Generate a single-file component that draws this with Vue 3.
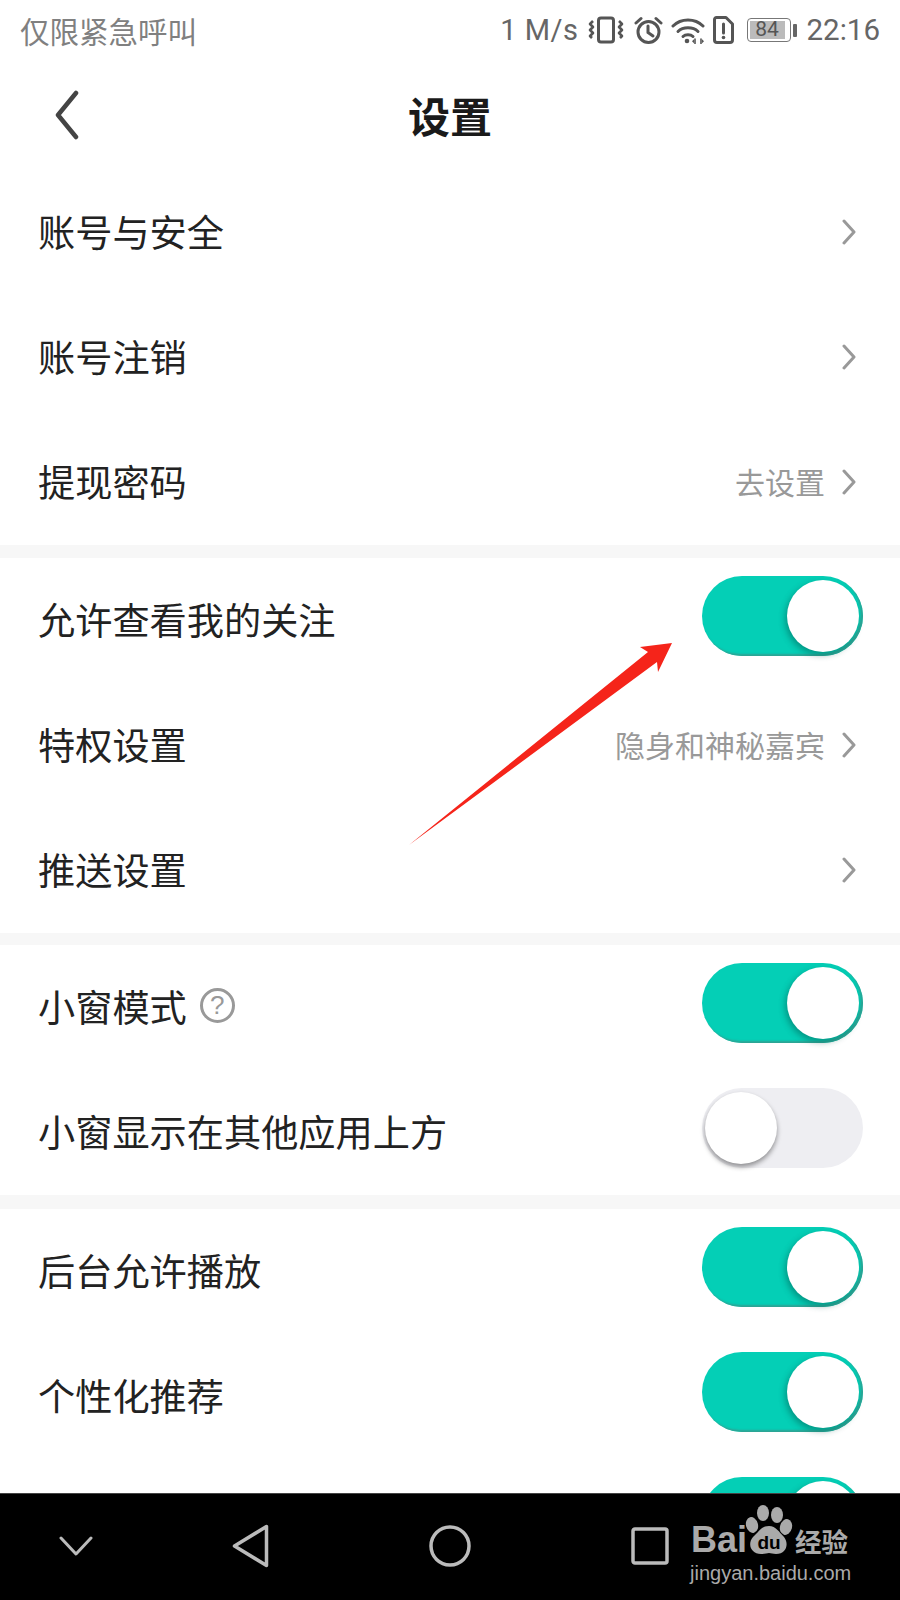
<script setup>
const sections = [
  { cls: 's1', rows: [
    { label: '账号与安全', type: 'link' },
    { label: '账号注销', type: 'link' },
    { label: '提现密码', type: 'link', value: '去设置' },
  ]},
  { cls: 's2', rows: [
    { label: '允许查看我的关注', type: 'on' },
    { label: '特权设置', type: 'link', value: '隐身和神秘嘉宾' },
    { label: '推送设置', type: 'link' },
  ]},
  { cls: 's3', rows: [
    { label: '小窗模式', type: 'on', help: true },
    { label: '小窗显示在其他应用上方', type: 'off' },
  ]},
  { cls: 's4', rows: [
    { label: '后台允许播放', type: 'on' },
    { label: '个性化推荐', type: 'on' },
    { label: '', type: 'on' },
  ]},
]
</script>

<template>
  <div class="phone">
    <div class="status">
      <span class="emergency">仅限紧急呼叫</span>
      <div class="status-right">
        <span class="speed">1 M/s</span>
        <svg class="ic-vib" width="36" height="28" viewBox="0 0 36 28" fill="none" stroke="#555" stroke-width="3" stroke-linejoin="round">
          <rect x="10.5" y="2" width="15" height="24" rx="2.5" />
          <path d="M5 5l-3 3 3 3-3 3 3 3-3 3 2 2" stroke-width="2.6" />
          <path d="M31 5l3 3-3 3 3 3-3 3 3 3-2 2" stroke-width="2.6" />
        </svg>
        <svg class="ic-alarm" width="29" height="29" viewBox="0 0 29 29" fill="none" stroke="#555" stroke-width="3" stroke-linecap="round">
          <circle cx="14.5" cy="16" r="10.5" />
          <path d="M14 10v6.5l5 3.5" />
          <path d="M2 7l5-4.5M27 7l-5-4.5" />
        </svg>
        <svg class="ic-wifi" width="34" height="27" viewBox="0 0 34 27" fill="none" stroke="#555" stroke-width="3" stroke-linecap="round">
          <path d="M2 9C10 1 24 1 32 9" />
          <path d="M7 14.5C12 9.5 22 9.5 27 14.5" />
          <path d="M12 19.5C14.5 17 19.5 17 22 19.5" />
          <circle cx="16" cy="24" r="2.3" fill="#555" stroke="none" />
          <path d="M24 22v4.5M30 22v4.5" stroke-width="1.6" />
          <path d="M21 24.2l2-2v4zM33 24.2l-2-2v4z" fill="#555" stroke="none" />
        </svg>
        <svg class="ic-sim" width="21" height="28" viewBox="0 0 21 28" fill="none" stroke="#555" stroke-width="3" stroke-linejoin="round">
          <path d="M3.5 1.5H13L19.5 8V24a2.5 2.5 0 0 1-2.5 2.5H4A2.5 2.5 0 0 1 1.5 24V3.5a2 2 0 0 1 2-2z" />
          <path d="M10.5 8v9" stroke-linecap="round" />
          <circle cx="10.5" cy="21.5" r="1.8" fill="#555" stroke="none" />
        </svg>
        <div class="battery">
          <div class="batt-body"><span class="batt-fill">84</span></div>
          <div class="batt-tip"></div>
        </div>
        <span class="time">22:16</span>
      </div>
    </div>

    <div class="header">
      <svg class="back" width="30" height="50" viewBox="0 0 30 50" fill="none" stroke="#444" stroke-width="4.5" stroke-linecap="round" stroke-linejoin="round">
        <path d="M23 3L5 25l18 22" />
      </svg>
      <span class="title">设置</span>
    </div>

    <div class="content">
      <section v-for="sec in sections" :key="sec.cls" class="section" :class="sec.cls">
        <div v-for="(row, i) in sec.rows" :key="i" class="row">
          <div class="label">
            <span>{{ row.label }}</span>
            <span v-if="row.help" class="help">?</span>
          </div>
          <div v-if="row.type === 'link'" class="link">
            <span v-if="row.value" class="value">{{ row.value }}</span>
            <svg width="14" height="26" viewBox="0 0 14 26" fill="none" stroke="#999" stroke-width="3" stroke-linecap="round" stroke-linejoin="round">
              <path d="M2 2l10 11L2 24" />
            </svg>
          </div>
          <div v-else class="toggle" :class="row.type"><div class="knob"></div></div>
        </div>
      </section>
    </div>

    <div class="nav">
      <svg class="n-down" width="34" height="20" viewBox="0 0 34 20" fill="none" stroke="#bbb" stroke-width="3" stroke-linecap="round" stroke-linejoin="round">
        <path d="M2 2l15 16L32 2" />
      </svg>
      <svg class="n-back" width="37" height="44" viewBox="0 0 37 44" fill="none" stroke="#bbb" stroke-width="3.5" stroke-linejoin="round">
        <path d="M34.5 2.5v39L2.5 22z" />
      </svg>
      <svg class="n-home" width="42" height="42" viewBox="0 0 42 42" fill="none" stroke="#bbb" stroke-width="3.5">
        <circle cx="21" cy="21" r="19" />
      </svg>
      <svg class="n-recent" width="38" height="38" viewBox="0 0 38 38" fill="none" stroke="#bbb" stroke-width="3.5" stroke-linejoin="round">
        <rect x="2" y="2" width="34" height="34" rx="2" />
      </svg>
    </div>

    <svg class="arrow" width="280" height="220" viewBox="0 0 280 220">
      <path d="M0 216L239 23L231 18L263 14L249 43L248 33z" fill="#f5241a" />
    </svg>

    <div class="watermark">
      <div class="wm-top">
        <span class="bai">Bai</span>
        <svg class="paw" width="48" height="52" viewBox="0 0 48 52">
          <g fill="#aaa">
            <ellipse cx="18" cy="9" rx="6" ry="8" />
            <ellipse cx="32" cy="11" rx="6" ry="8" />
            <ellipse cx="7" cy="21" rx="6" ry="8" transform="rotate(-15 7 21)" />
            <ellipse cx="41" cy="23" rx="6" ry="8" transform="rotate(15 41 23)" />
            <path d="M24 22c7 0 10 6 15 11 5 6 3 17-8 17-3 0-5-1-7-1s-4 1-8 1C6 50 2 40 8 33c6-5 8-11 16-11z" />
          </g>
          <text x="24" y="45" text-anchor="middle" class="du">du</text>
        </svg>
        <span class="jy">经验</span>
      </div>
      <div class="wm-url">jingyan.baidu.com</div>
    </div>
  </div>
</template>

<style>
html, body { margin: 0; background: #fff; }
</style>

<style scoped>
.phone {
  position: relative;
  width: 900px;
  height: 1600px;
  overflow: hidden;
  background: #fff;
  display: flex;
  flex-direction: column;
  font-family: "Noto Sans CJK SC", "Noto Sans", sans-serif;
  color: #222;
}
.status {
  height: 60px;
  flex: none;
  display: flex;
  align-items: center;
  justify-content: space-between;
  padding: 0 20px 0 20px;
  color: #777;
}
.emergency { font-size: 29.5px; font-weight: 400; color: #808080; }
.status-right { display: flex; align-items: center; }
.speed { font-family: Roboto, sans-serif; font-size: 29px; color: #666; margin-right: 9px; letter-spacing: 0.5px; }
.ic-vib { margin-right: 10px; }
.ic-alarm { margin-right: 8px; }
.ic-wifi { margin-right: 8px; }
.ic-sim { margin-right: 13px; }
.battery { display: flex; align-items: center; margin-right: 10px; }
.batt-body {
  width: 44px;
  height: 24px;
  box-sizing: border-box;
  border: 1.5px solid #777;
  border-radius: 4px;
  padding: 2px;
  display: flex;
}
.batt-fill {
  width: 35px;
  background: #bbb;
  color: #555;
  font-family: Roboto, sans-serif;
  font-size: 21px;
  line-height: 17px;
  text-align: center;
}
.batt-tip { width: 4px; height: 13px; margin-left: 2px; background: #666; border-radius: 1px; }
.time { font-family: Roboto, sans-serif; font-size: 29.5px; color: #666; }

.header {
  height: 110px;
  flex: none;
  display: flex;
  align-items: center;
  justify-content: center;
  position: relative;
}
.back { position: absolute; left: 53px; top: 30px; }
.title { font-size: 42px; font-weight: 700; color: #1a1a1a; padding-bottom: 1px; }

.content { flex: 1; min-height: 0; overflow: hidden; background: #f7f7f7; }
.section { background: #fff; }
.s1 { margin-bottom: 13px; }
.s2 { margin-bottom: 12px; }
.s3 { margin-bottom: 14px; }
.row {
  height: 125px;
  box-sizing: border-box;
  display: flex;
  align-items: center;
  justify-content: space-between;
  padding: 0 37px 0 38px;
}
.label { display: flex; align-items: center; font-size: 37.2px; color: #222; padding-bottom: 4px; }
.help {
  width: 35px;
  height: 35px;
  box-sizing: border-box;
  margin-left: 13px;
  border: 3px solid #999;
  border-radius: 50%;
  display: flex;
  align-items: center;
  justify-content: center;
  font-family: "Liberation Sans", sans-serif;
  font-size: 26px;
  color: #999;
}
.link { display: flex; align-items: center; margin-right: 7px; margin-bottom: 2px; }
.value { font-size: 30px; color: #999; margin-right: 17px; padding-bottom: 2px; }

.toggle {
  position: relative;
  width: 161px;
  height: 80px;
  margin-bottom: 10px;
  border-radius: 40px;
  box-sizing: border-box;
  display: flex;
  align-items: center;
  padding: 0 4px;
}
.toggle.on { background: #04cfb6; justify-content: flex-end; box-shadow: inset -2px -2px 2px #2fa394; }
.toggle.off { background: #eeeef2; justify-content: flex-start; padding: 0 3px; }
.knob { width: 72px; height: 72px; border-radius: 50%; background: #fff; }
.toggle.on .knob { box-shadow: -2px 3px 6px rgba(0, 80, 70, 0.45); }
.toggle.off .knob { box-shadow: 0 3px 5px rgba(0, 0, 0, 0.4); }

.nav {
  position: relative;
  height: 107px;
  flex: none;
  background: #000;
  border-top: 1px solid #444;
  box-sizing: border-box;
  display: flex;
  align-items: center;
  padding-left: 59px;
  padding-bottom: 3px;
}
.n-back { margin-left: 139px; }
.n-home { margin-left: 160px; }
.n-recent { margin-left: 160px; }

.arrow { position: absolute; left: 409px; top: 629px; }

.watermark { position: absolute; left: 690px; top: 1504px; width: 164px; color: #aaa; }
.wm-top { display: flex; align-items: flex-end; height: 52px; }
.bai { font-family: "Liberation Sans", sans-serif; font-size: 36px; font-weight: 700; line-height: 32px; width: 55px; padding-left: 1px; box-sizing: border-box; }
.paw { flex: none; }
.du { font-family: "Liberation Sans", sans-serif; font-size: 19px; font-weight: 700; fill: #000; }
.jy { font-size: 26.5px; font-weight: 700; line-height: 30px; margin-left: 2px; white-space: nowrap; }
.wm-url { font-family: "Liberation Sans", sans-serif; font-size: 20px; line-height: 28px; margin-top: 3px; white-space: nowrap; }
</style>
